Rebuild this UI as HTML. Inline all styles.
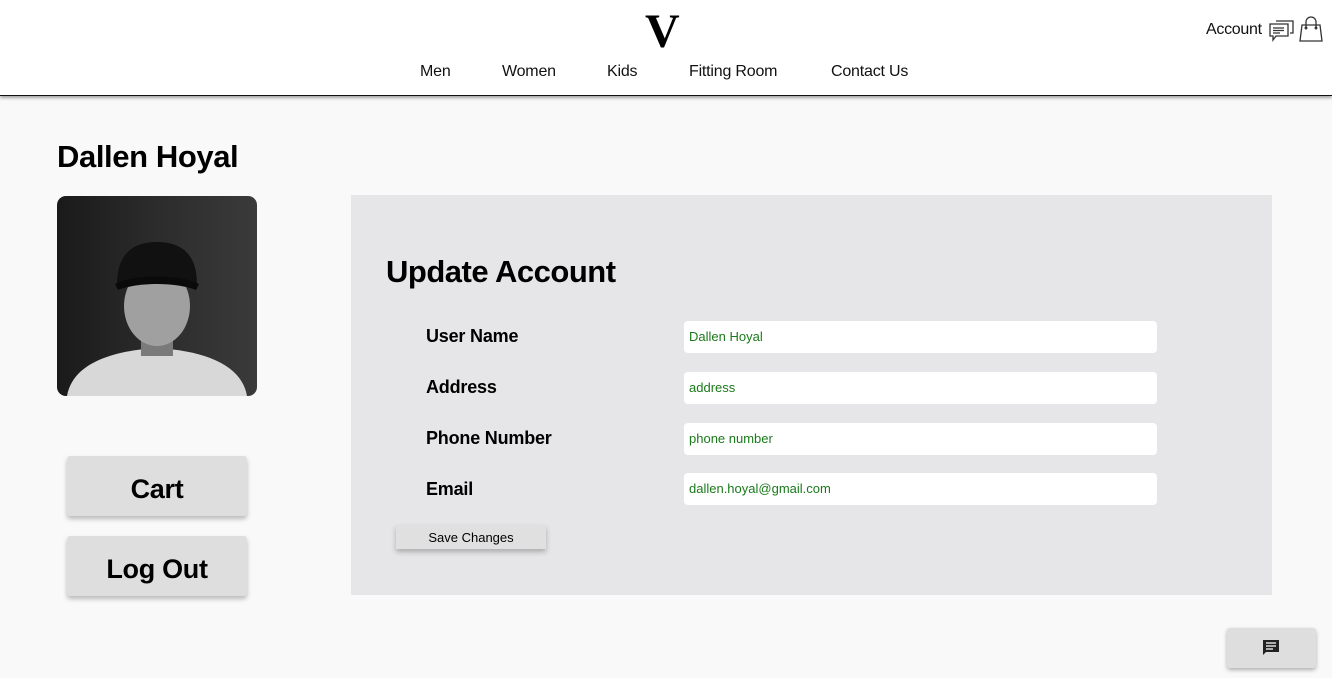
<!DOCTYPE html>
<html><head><style>
*{margin:0;padding:0;box-sizing:border-box}
body{width:1332px;height:678px;background:#f9f9f9;font-family:"Liberation Sans",Arial,sans-serif;position:relative;overflow:hidden}
header{position:absolute;left:0;top:0;width:1332px;height:96px;background:#fff;border-bottom:1.5px solid #111;box-shadow:0 2px 3px rgba(0,0,0,.35)}
.logo{position:absolute;left:645px;top:8px;font-family:"Liberation Serif",serif;font-weight:bold;font-size:48px;line-height:48px}
.nav a{position:absolute;top:63px;font-size:16px;color:#111;text-decoration:none;letter-spacing:-.2px}
.acct{position:absolute;left:1206px;top:21px;font-size:16px;color:#111;letter-spacing:-.3px}
.abs{position:absolute}
h1{position:absolute;left:57px;top:139px;font-size:31px;font-weight:bold;letter-spacing:-.4px}
.photo{position:absolute;left:57px;top:196px;width:200px;height:200px;border-radius:9px;overflow:hidden}
.btn{position:absolute;left:67px;width:180px;height:60px;background:#dedede;box-shadow:0 3px 5px rgba(0,0,0,.25);border-radius:3px;font-weight:bold;font-size:27px;text-align:center;line-height:66px;letter-spacing:-.3px}
.panel{position:absolute;left:351px;top:195px;width:921px;height:400px;background:#e6e6e8}
.panel h2{position:absolute;left:35px;top:59px;font-size:31px;font-weight:bold;letter-spacing:-.5px}
.lbl{position:absolute;left:75px;font-size:18px;font-weight:bold;letter-spacing:-.2px}
.inp{position:absolute;left:333px;width:473px;height:32px;background:#fff;border-radius:4px;font-size:13px;color:#1a7a1a;padding:8px 5px}
.save{position:absolute;left:45px;top:330px;width:150px;height:24px;background:#e0e0e0;box-shadow:0 3px 5px rgba(0,0,0,.25);font-size:13px;text-align:center;line-height:25px}
.chat{position:absolute;left:1227px;top:628px;width:89px;height:40px;background:#dedede;border-radius:3px;box-shadow:0 2px 4px rgba(0,0,0,.3)}
</style></head><body>
<header>
<div class="logo">V</div>
<div class="nav"><a style="left:420px">Men</a><a style="left:502px">Women</a><a style="left:607px">Kids</a><a style="left:689px">Fitting Room</a><a style="left:831px">Contact Us</a></div>
<div class="acct">Account</div>
<svg class="abs" style="left:1268px;top:17px" width="28" height="26" viewBox="0 0 28 26" fill="none" stroke="#333" stroke-width="1.3"><path d="M8 4h17v12h-3M2 7h18v12H8l-3 4v-4H2z"/><path d="M5 11h11M5 13.5h11M5 16h7"/></svg>
<svg class="abs" style="left:1298px;top:16px" width="26" height="28" viewBox="0 0 26 28" fill="none" stroke="#333" stroke-width="1.3"><path d="M4 9h18l2 16H2z"/><path d="M8 12V6a5 5 0 0 1 10 0v6"/><circle cx="8" cy="12" r=".8" fill="#333"/><circle cx="18" cy="12" r=".8" fill="#333"/></svg>
</header>
<h1>Dallen Hoyal</h1>
<div class="photo">
<svg width="200" height="200" viewBox="0 0 200 200"><defs><linearGradient id="g" x1="0" x2="1"><stop offset="0" stop-color="#1a1a1a"/><stop offset=".5" stop-color="#2c2c2c"/><stop offset="1" stop-color="#3a3a3a"/></linearGradient></defs><rect width="200" height="200" fill="url(#g)"/><path d="M10 200c5-30 40-45 90-48 50 3 85 18 90 48z" fill="#d8d8d8"/><rect x="84" y="125" width="32" height="35" fill="#7a7a7a"/><ellipse cx="100" cy="110" rx="33" ry="40" fill="#a0a0a0"/><path d="M60 88c0-32 18-42 40-42s40 10 40 42c-20-8-60-8-80 0z" fill="#111"/><path d="M58 88c20-10 64-10 84 0l-3 6c-20-8-58-8-78 0z" fill="#0a0a0a"/></svg>
</div>
<div class="btn" style="top:456px">Cart</div>
<div class="btn" style="top:536px">Log Out</div>
<div class="panel">
<h2>Update Account</h2>
<div class="lbl" style="top:131px">User Name</div><div class="inp" style="top:126px">Dallen Hoyal</div>
<div class="lbl" style="top:182px">Address</div><div class="inp" style="top:177px">address</div>
<div class="lbl" style="top:233px">Phone Number</div><div class="inp" style="top:228px">phone number</div>
<div class="lbl" style="top:284px">Email</div><div class="inp" style="top:278px">dallen.hoyal@gmail.com</div>
<div class="save">Save Changes</div>
</div>
<div class="chat"><svg style="position:absolute;left:34px;top:10px" width="20" height="20" viewBox="0 0 20 20"><path d="M2 2h16v12H5l-3 3z" fill="#222"/><path d="M5 5h10M5 8h10M5 11h7" stroke="#ddd" stroke-width="1.5"/></svg></div>
</body></html>
